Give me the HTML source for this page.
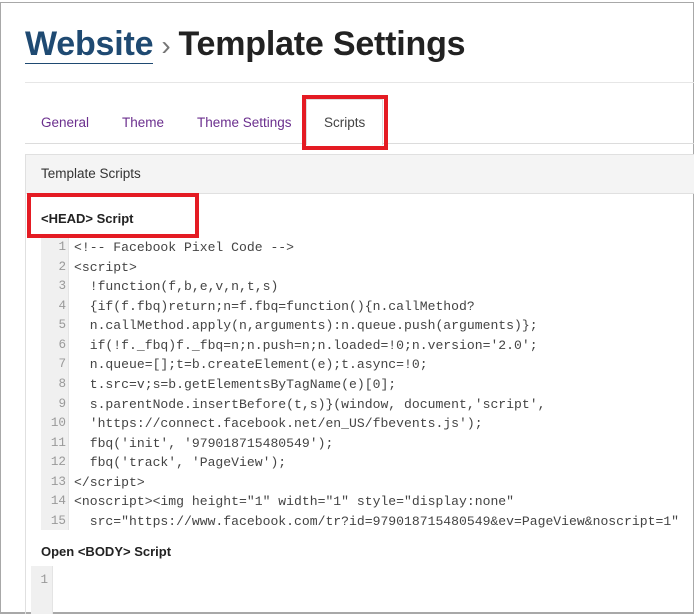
<!DOCTYPE html>
<html><head><meta charset="utf-8"><style>
*{margin:0;padding:0;box-sizing:border-box}
body{width:694px;height:614px;overflow:hidden;background:#fff;font-family:"Liberation Sans",Arial,sans-serif;position:relative}
.frame{position:absolute;left:0;top:2px;width:694px;height:612px;border:1px solid #a8a8a8;border-bottom:2px solid #a8a8a8}
.abs{position:absolute}
h1{position:absolute;left:25px;top:25px;font-size:34px;font-weight:bold;color:#222;letter-spacing:-0.2px;white-space:nowrap}
h1 .w{color:#1f4a72;border-bottom:1.5px solid #1f4a72}
h1 .sep{color:#777;font-weight:normal;font-size:28px;margin:0 8px 0 8px}
.tab{position:absolute;top:115px;font-size:13.5px;color:#6b2f8e}
.red{position:absolute;border:4px solid #e41b23}
.code{position:absolute;font-family:"Liberation Mono","Courier New",monospace;font-size:13.1px;color:#444;white-space:pre}
.ln{position:absolute;font-family:"Liberation Mono",monospace;font-size:12.6px;color:#999;text-align:right;width:18px}
</style></head><body>
<div class="frame"></div>
<h1><span class="w">Website</span><span class="sep">›</span>Template Settings</h1>
<div class="abs" style="left:25px;top:82px;width:669px;height:1px;background:#e6e6e6"></div>
<div class="tab" style="left:41px">General</div>
<div class="tab" style="left:122px">Theme</div>
<div class="tab" style="left:197px">Theme Settings</div>
<div class="abs" style="left:25px;top:143px;width:669px;height:1px;background:#dcdcdc"></div>
<div class="abs" style="left:306px;top:99px;width:77px;height:46px;background:#fff;border:1px solid #ddd;border-bottom:none"></div>
<div class="tab" style="left:324px;color:#444">Scripts</div>
<div class="red" style="left:302px;top:95px;width:86px;height:55px"></div>
<div class="abs" style="left:25px;top:154px;width:669px;height:460px;border-left:1px solid #e0e0e0;border-top:1px solid #e0e0e0"></div>
<div class="abs" style="left:26px;top:155px;width:668px;height:39px;background:#f4f4f4;border-bottom:1px solid #e0e0e0"></div>
<div class="abs" style="left:41px;top:166px;font-size:13.5px;color:#333">Template Scripts</div>
<div class="abs" style="left:41px;top:211px;font-size:13px;font-weight:bold;color:#222">&lt;HEAD&gt; Script</div>
<div class="red" style="left:27px;top:193px;width:172px;height:45px"></div>
<div class="abs" style="left:41px;top:238px;width:28px;height:292px;background:#f0f0f0;border-right:1px solid #e4e4e4"></div>
<div class="ln" style="left:48px;top:238px;line-height:19.57px">1
2
3
4
5
6
7
8
9
10
11
12
13
14
15</div>
<div class="code" style="left:74px;top:238px;line-height:19.57px">&lt;!-- Facebook Pixel Code --&gt;
&lt;script&gt;
  !function(f,b,e,v,n,t,s)
  {if(f.fbq)return;n=f.fbq=function(){n.callMethod?
  n.callMethod.apply(n,arguments):n.queue.push(arguments)};
  if(!f._fbq)f._fbq=n;n.push=n;n.loaded=!0;n.version='2.0';
  n.queue=[];t=b.createElement(e);t.async=!0;
  t.src=v;s=b.getElementsByTagName(e)[0];
  s.parentNode.insertBefore(t,s)}(window, document,'script',
  'https://connect.facebook.net/en_US/fbevents.js');
  fbq('init', '979018715480549');
  fbq('track', 'PageView');
&lt;/script&gt;
&lt;noscript&gt;&lt;img height="1" width="1" style="display:none"
  src="https://www.facebook.com/tr?id=979018715480549&amp;ev=PageView&amp;noscript=1"</div>
<div class="abs" style="left:41px;top:544px;font-size:13px;font-weight:bold;color:#222">Open &lt;BODY&gt; Script</div>
<div class="abs" style="left:31px;top:566px;width:22px;height:48px;background:#f0f0f0;border-right:1px solid #e4e4e4"></div>
<div class="ln" style="left:30px;top:573px">1</div>
</body></html>
